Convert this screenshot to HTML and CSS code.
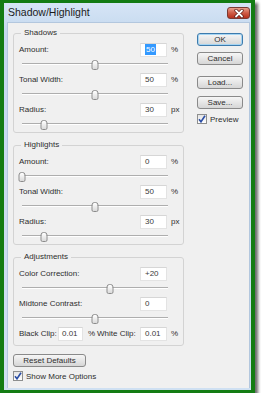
FILE: index.html
```html
<!DOCTYPE html>
<html lang="en">
<head>
    <meta charset="UTF-8">
    <meta name="viewport" content="width=device-width, initial-scale=1.0">
    <title>Shadow/Highlight</title>
    <link rel="stylesheet" href="styles.css">
</head>
<body>

<div class="frame">
    <div class="window">
        <div class="titlebar">
            <span class="title">Shadow/Highlight</span>
            <span class="close">
                <svg width="10" height="9" viewBox="0 0 10 9">
                    <path d="M2 1.5 L8 7.5 M8 1.5 L2 7.5" stroke="#5a1a14" stroke-width="3.2" stroke-linecap="round"/>
                    <path d="M2 1.5 L8 7.5 M8 1.5 L2 7.5" stroke="#fff" stroke-width="1.8" stroke-linecap="round"/>
                </svg>
            </span>
        </div>

        <div class="content">
            <div class="main">
                <fieldset class="group">
                    <legend>Shadows</legend>
                    <div class="row">
                        <span class="label">Amount:</span>
                        <span class="field"><span class="selected">50</span></span>
                        <span class="unit">%</span>
                    </div>
                    <div class="slider"><span class="thumb" style="left:50%"></span></div>
                    <div class="row">
                        <span class="label">Tonal Width:</span>
                        <span class="field">50</span>
                        <span class="unit">%</span>
                    </div>
                    <div class="slider"><span class="thumb" style="left:50%"></span></div>
                    <div class="row">
                        <span class="label">Radius:</span>
                        <span class="field">30</span>
                        <span class="unit">px</span>
                    </div>
                    <div class="slider"><span class="thumb" style="left:15%"></span></div>
                </fieldset>

                <fieldset class="group">
                    <legend>Highlights</legend>
                    <div class="row">
                        <span class="label">Amount:</span>
                        <span class="field">0</span>
                        <span class="unit">%</span>
                    </div>
                    <div class="slider"><span class="thumb" style="left:0%"></span></div>
                    <div class="row">
                        <span class="label">Tonal Width:</span>
                        <span class="field">50</span>
                        <span class="unit">%</span>
                    </div>
                    <div class="slider"><span class="thumb" style="left:50%"></span></div>
                    <div class="row">
                        <span class="label">Radius:</span>
                        <span class="field">30</span>
                        <span class="unit">px</span>
                    </div>
                    <div class="slider"><span class="thumb" style="left:15%"></span></div>
                </fieldset>

                <fieldset class="group adjust">
                    <legend>Adjustments</legend>
                    <div class="row">
                        <span class="label">Color Correction:</span>
                        <span class="field">+20</span>
                        <span class="unit"></span>
                    </div>
                    <div class="slider"><span class="thumb" style="left:60%"></span></div>
                    <div class="row">
                        <span class="label">Midtone Contrast:</span>
                        <span class="field">0</span>
                        <span class="unit"></span>
                    </div>
                    <div class="slider"><span class="thumb" style="left:50%"></span></div>
                    <div class="row">
                        <span class="clip-label">Black Clip:</span>
                        <span class="field small">0.01</span>
                        <span class="clip-unit">%</span>
                        <span class="clip-label wide">White Clip:</span>
                        <span class="field">0.01</span>
                        <span class="unit">%</span>
                    </div>
                </fieldset>

                <button class="btn reset">Reset Defaults</button>
                <div class="check more">
                    <span class="box">
                        <svg width="8" height="8" viewBox="0 0 8 8">
                            <path d="M1 4.2 L3 6.8 L7 0.8" fill="none" stroke="#2b4ea6" stroke-width="1.6"/>
                        </svg>
                    </span>
                    Show More Options
                </div>
            </div>

            <div class="side">
                <button class="btn default">OK</button>
                <button class="btn cancel">Cancel</button>
                <button class="btn load">Load...</button>
                <button class="btn save">Save...</button>
                <div class="check preview">
                    <span class="box">
                        <svg width="8" height="8" viewBox="0 0 8 8">
                            <path d="M1 4.2 L3 6.8 L7 0.8" fill="none" stroke="#2b4ea6" stroke-width="1.6"/>
                        </svg>
                    </span>
                    Preview
                </div>
            </div>
        </div>
    </div>
</div>

</body>
</html>
```

FILE: styles.css
```css
body {
    margin: 0;
    padding: 0;
    background-color: white;
    font-family: "Liberation Sans", Arial, sans-serif;
}

.frame {
    width: 247px;
    height: 387px;
    border-style: solid;
    border-color: #137c13;
    border-width: 3px 4px 3px 4px;
    box-shadow: 3px 3px 3px #6a6a6a;
}

.window {
    height: 100%;
    box-sizing: border-box;
    padding: 0 1px 2px 3px;
    background: linear-gradient(#d6e5f6, #c4d8ee 30px, #cfe0f2);
    display: flex;
    flex-direction: column;
}

.titlebar {
    height: 19px;
    display: flex;
    justify-content: space-between;
    align-items: flex-start;
}

.title {
    font-size: 10.5px;
    line-height: 19px;
    color: #1c1c1c;
    padding-left: 1px;
}

.close {
    margin-top: 4px;
    width: 23px;
    height: 12px;
    border: 1px solid #7a3a33;
    border-radius: 3px;
    background: linear-gradient(#e8a08e, #cf5b45 50%, #b7301c);
    display: flex;
    align-items: center;
    justify-content: center;
    box-sizing: border-box;
}

.content {
    flex: 1;
    background-color: #f0f0f0;
    border: 1px solid #b3c7de;
    border-bottom: none;
    display: flex;
    padding: 5px 6px 0 5px;
    gap: 13px;
    font-size: 8px;
    color: #2e2e2e;
}

.main {
    width: 171px;
    display: flex;
    flex-direction: column;
}

.group {
    box-sizing: border-box;
    width: 171px;
    margin: 0 0 7px 0;
    padding: 4px 3px 0 5px;
    border: 1px solid #d3d3d3;
    border-radius: 3px;
    min-width: 0;
}

.group legend {
    margin-left: 2px;
    padding: 0 3px;
    font-size: 8px;
    line-height: 10px;
}

.adjust {
    padding-bottom: 4px;
}

.row {
    height: 15px;
    display: flex;
    align-items: center;
}

.label {
    flex: 1;
}

.field {
    box-sizing: border-box;
    width: 27px;
    height: 14px;
    padding-left: 4px;
    background-color: white;
    border: 1px solid #e3e3e3;
    border-top-color: #d6d6d6;
    line-height: 12px;
    color: #3a3a3a;
}

.field.small {
    width: 25px;
    padding-left: 3px;
}

.selected {
    background-color: #3399ff;
    color: white;
    padding: 1px 1px;
}

.unit {
    width: 13px;
    padding-left: 4px;
    box-sizing: border-box;
}

.clip-label {
    width: 39px;
}

.clip-label.wide {
    width: 43px;
}

.clip-unit {
    width: 9px;
    padding-left: 5px;
}

.slider {
    position: relative;
    height: 15px;
    margin: 0 12px 0 3px;
}

.slider::before {
    content: "";
    position: absolute;
    left: 0;
    right: 0;
    top: 6px;
    border-top: 1px solid #aeaeae;
    border-bottom: 1px solid #ffffff;
}

.thumb {
    position: absolute;
    top: 3px;
    width: 5px;
    height: 8px;
    transform: translateX(-50%);
    background: linear-gradient(#ffffff, #dadada);
    border: 1px solid #8c8c8c;
    border-radius: 3px 3px 2px 2px;
}

.btn {
    box-sizing: border-box;
    height: 13px;
    padding: 0;
    font-family: "Liberation Sans", Arial, sans-serif;
    font-size: 8px;
    line-height: 11px;
    color: #2e2e2e;
    background: linear-gradient(#f6f6f6, #e6e6e6 50%, #d6d6d6);
    border: 1px solid #8a8a8a;
    border-radius: 3px;
}

.reset {
    width: 73px;
    margin-top: 1px;
}

.check {
    display: flex;
    align-items: center;
    gap: 3px;
    height: 10px;
}

.more {
    margin-top: 4px;
}

.box {
    box-sizing: border-box;
    width: 10px;
    height: 10px;
    border: 1px solid #8e8f8f;
    background: linear-gradient(#e4e4e4, #ffffff);
    display: flex;
    align-items: center;
    justify-content: center;
}

.side {
    width: 46px;
    padding-top: 5px;
    display: flex;
    flex-direction: column;
}

.side .btn {
    width: 46px;
}

.default {
    border-color: #3d7bad;
    box-shadow: inset 0 0 0 1px #a6d5f3;
}

.cancel {
    margin-top: 6px;
}

.load {
    margin-top: 11px;
}

.save {
    margin-top: 7px;
}

.preview {
    margin-top: 5px;
}
```
